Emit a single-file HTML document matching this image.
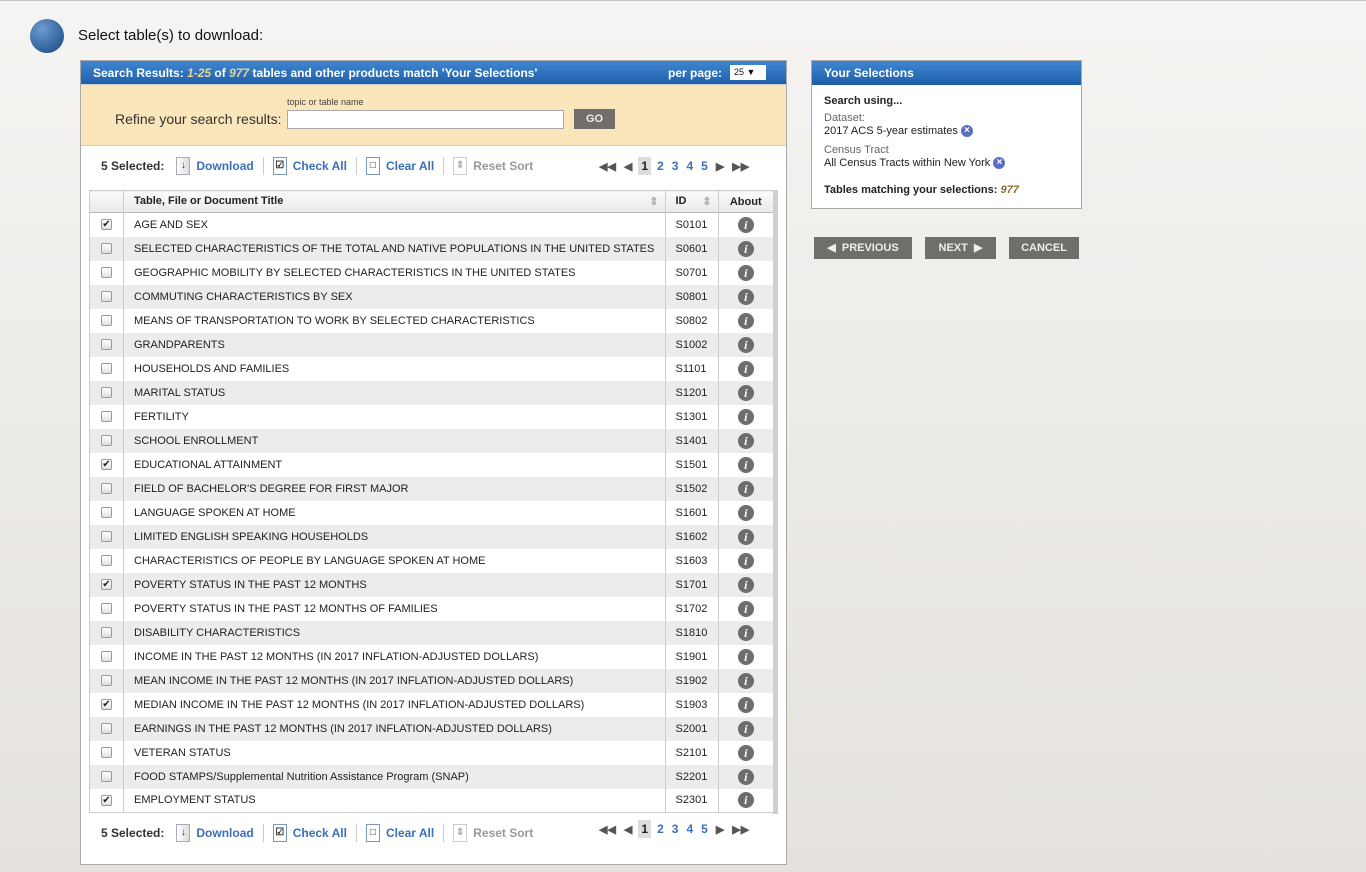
<!DOCTYPE html>
<html><head><meta charset="utf-8"><style>
*{box-sizing:border-box;margin:0;padding:0}
body{width:1366px;height:872px;overflow:hidden;font-family:"Liberation Sans",Arial,sans-serif;background:linear-gradient(#f5f4f2,#e5e2dd);position:relative}
.abs{position:absolute}
.topline{left:0;top:0;width:1366px;height:1px;background:#c8c8c8}
.circ{left:30px;top:19px;width:34px;height:34px;border-radius:50%;background:radial-gradient(circle at 35% 30%,#6b9bd0,#2f5f98 70%,#244c7e)}
.title{left:78px;top:27px;font-size:15px;color:#111}
.panel{left:80px;top:60px;width:707px;height:805px;background:#fff;border:1px solid #a9a9a9}
.hdr{background:linear-gradient(#3f86d0,#1e5ea9);color:#fff;font-weight:bold;font-size:12px;height:24px;line-height:24px;padding-left:12px}
.hdr i{color:#e7d58d}
.refine{position:absolute;left:0;top:23px;width:705px;height:62px;background:#fbe5ba;border-top:1px solid #ccc;border-bottom:1px solid #ccc}
.tool{position:absolute;font-size:12px;color:#333;display:flex;align-items:center}
.tool b{margin-right:12px}
.lk{color:#3b6fb6;font-weight:bold;display:flex;align-items:center}
.sep{width:1px;height:18px;background:#ccc;margin:0 9px}
.ic{width:14px;height:18px;border:1px solid #7d96b8;margin-right:6px;background:#fff;font-size:10px;text-align:center;line-height:16px;color:#333}
.pg{position:absolute;font-size:12px;color:#3b6fb6;display:flex;align-items:center;font-weight:bold}
.pg span{margin:0 4px}
.pg .cur{background:#ddd;color:#222;padding:2px 3px;margin:0 2px}
.pg .ar{color:#555;font-size:11px}
table{position:absolute;left:8px;top:129px;width:684px;border-collapse:collapse;font-size:11px;color:#222;border-bottom:1px solid #ccc}
td,th{height:24px;border-right:1px solid #ccc}
th{height:22px;background:linear-gradient(#fafafa,#e9e9e9);text-align:left;font-size:11px;border-bottom:1px solid #bbb;border-top:1px solid #ccc;padding-left:10px}
#tb tr:nth-child(even) td{background:#ececec}
td.c{width:34px;text-align:center;border-left:1px solid #ccc}
td.t{padding-left:10px}
td.i{width:53px;padding-left:10px}
td.a{width:55px;text-align:center;border-right:none}
.cb{display:inline-block;width:11px;height:11px;border:1px solid #999;border-radius:2px;background:linear-gradient(#fff,#e0e0e0);font-size:10px;line-height:9px;vertical-align:middle;color:#222}
.inf{display:inline-block;width:16px;height:16px;border-radius:50%;background:#6d6d6d;color:#fff;font:italic bold 12px "Liberation Serif",serif;line-height:16px;vertical-align:middle}
.sb{position:absolute;left:692px;top:129px;width:5px;height:624px;background:#cfcfcf}
.sel{left:811px;top:60px;width:271px;height:149px;background:#fff;border:1px solid #a9a9a9}
.btn{background:#706e6a;color:#eee;font-size:11px;font-weight:bold;height:22px;line-height:22px;text-align:center;position:absolute;top:237px}
.x{display:inline-block;width:12px;height:12px;border-radius:50%;background:#5a6fc2;color:#fff;font-size:10px;line-height:12px;text-align:center;font-weight:bold;vertical-align:middle}
</style></head><body>
<div class="abs topline"></div>
<div class="abs circ"></div>
<div class="abs title">Select table(s) to download:</div>
<div class="abs panel">
 <div class="hdr">Search Results: <i>1-25</i> of <i>977</i> tables and other products match 'Your Selections'
  <span style="position:absolute;right:64px;color:#fff">per page:</span>
  <span style="position:absolute;right:20px;top:4px;width:36px;height:15px;background:#fff;color:#111;font-size:9px;line-height:15px;padding-left:4px;font-weight:normal">25 &#9660;</span></div>
 <div class="refine">
  <span style="position:absolute;left:206px;top:12px;font-size:9px;color:#444">topic or table name</span>
  <span style="position:absolute;left:34px;top:26px;font-size:14px;color:#333">Refine your search results:</span>
  <span style="position:absolute;left:206px;top:25px;width:277px;height:19px;background:#fff;border:1px solid #aaa"></span>
  <span style="position:absolute;left:493px;top:24px;width:41px;height:20px;background:#706e6a;color:#eee;font-size:11px;font-weight:bold;text-align:center;line-height:20px">GO</span>
 </div>
 <div class="tool" style="left:20px;top:96px"><b>5 Selected:</b><span class="lk"><span class="ic" style="border:1px solid #aab;background:linear-gradient(90deg,#fff,#ddd)">&#8595;</span>Download</span><span class="sep"></span><span class="lk"><span class="ic">&#9745;</span>Check All</span><span class="sep"></span><span class="lk"><span class="ic">&#9633;</span>Clear All</span><span class="sep"></span><span class="lk" style="color:#999"><span class="ic" style="border-color:#ccc;color:#aaa">&#8661;</span>Reset Sort</span></div>
 <div class="pg" style="left:514px;top:96px"><span class="ar">&#9664;&#9664;</span><span class="ar">&#9664;</span><span class="cur">1</span><span>2</span><span>3</span><span>4</span><span>5</span><span class="ar">&#9654;</span><span class="ar">&#9654;&#9654;</span></div>
 <table>
  <thead><tr><th style="width:34px;border-left:1px solid #ccc;padding:0"></th><th>Table, File or Document Title<span style="float:right;margin-right:6px;color:#aaa">&#8661;</span></th><th>ID<span style="float:right;margin-right:6px;color:#aaa">&#8661;</span></th><th style="text-align:center;padding:0;border-right:none">About</th></tr></thead>
  <tbody id="tb"></tbody>
 </table>
 <div class="sb"></div>
 <div class="tool" style="left:20px;top:763px"><b>5 Selected:</b><span class="lk"><span class="ic" style="border:1px solid #aab;background:linear-gradient(90deg,#fff,#ddd)">&#8595;</span>Download</span><span class="sep"></span><span class="lk"><span class="ic">&#9745;</span>Check All</span><span class="sep"></span><span class="lk"><span class="ic">&#9633;</span>Clear All</span><span class="sep"></span><span class="lk" style="color:#999"><span class="ic" style="border-color:#ccc;color:#aaa">&#8661;</span>Reset Sort</span></div>
 <div class="pg" style="left:514px;top:759px"><span class="ar">&#9664;&#9664;</span><span class="ar">&#9664;</span><span class="cur">1</span><span>2</span><span>3</span><span>4</span><span>5</span><span class="ar">&#9654;</span><span class="ar">&#9654;&#9654;</span></div>
</div>
<div class="abs sel">
 <div class="hdr">Your Selections</div>
 <div style="padding:10px 12px;font-size:11px;color:#222;line-height:13px">
  <div style="font-weight:bold;margin-bottom:4px">Search using...</div>
  <div style="color:#666">Dataset:</div>
  <div>2017 ACS 5-year estimates <span class="x">&#215;</span></div>
  <div style="color:#666;margin-top:6px">Census Tract</div>
  <div>All Census Tracts within New York <span class="x">&#215;</span></div>
  <div style="font-weight:bold;margin-top:14px">Tables matching your selections: <i style="color:#8b6d2c">977</i></div>
 </div>
</div>
<div class="btn" style="left:814px;width:98px">&#9664;&nbsp; PREVIOUS</div>
<div class="btn" style="left:925px;width:71px">NEXT &nbsp;&#9654;</div>
<div class="btn" style="left:1009px;width:70px">CANCEL</div>
<script>
var r=[["AGE AND SEX","S0101",1],["SELECTED CHARACTERISTICS OF THE TOTAL AND NATIVE POPULATIONS IN THE UNITED STATES","S0601"],["GEOGRAPHIC MOBILITY BY SELECTED CHARACTERISTICS IN THE UNITED STATES","S0701"],["COMMUTING CHARACTERISTICS BY SEX","S0801"],["MEANS OF TRANSPORTATION TO WORK BY SELECTED CHARACTERISTICS","S0802"],["GRANDPARENTS","S1002"],["HOUSEHOLDS AND FAMILIES","S1101"],["MARITAL STATUS","S1201"],["FERTILITY","S1301"],["SCHOOL ENROLLMENT","S1401"],["EDUCATIONAL ATTAINMENT","S1501",1],["FIELD OF BACHELOR'S DEGREE FOR FIRST MAJOR","S1502"],["LANGUAGE SPOKEN AT HOME","S1601"],["LIMITED ENGLISH SPEAKING HOUSEHOLDS","S1602"],["CHARACTERISTICS OF PEOPLE BY LANGUAGE SPOKEN AT HOME","S1603"],["POVERTY STATUS IN THE PAST 12 MONTHS","S1701",1],["POVERTY STATUS IN THE PAST 12 MONTHS OF FAMILIES","S1702"],["DISABILITY CHARACTERISTICS","S1810"],["INCOME IN THE PAST 12 MONTHS (IN 2017 INFLATION-ADJUSTED DOLLARS)","S1901"],["MEAN INCOME IN THE PAST 12 MONTHS (IN 2017 INFLATION-ADJUSTED DOLLARS)","S1902"],["MEDIAN INCOME IN THE PAST 12 MONTHS (IN 2017 INFLATION-ADJUSTED DOLLARS)","S1903",1],["EARNINGS IN THE PAST 12 MONTHS (IN 2017 INFLATION-ADJUSTED DOLLARS)","S2001"],["VETERAN STATUS","S2101"],["FOOD STAMPS/Supplemental Nutrition Assistance Program (SNAP)","S2201"],["EMPLOYMENT STATUS","S2301",1]];
var h="";r.forEach(function(x){h+='<tr><td class="c"><span class="cb">'+(x[2]?'&#10004;':'')+'</span></td><td class="t">'+x[0]+'</td><td class="i">'+x[1]+'</td><td class="a"><span class="inf">i</span></td></tr>'});
document.getElementById("tb").innerHTML=h;
</script>
</body></html>
